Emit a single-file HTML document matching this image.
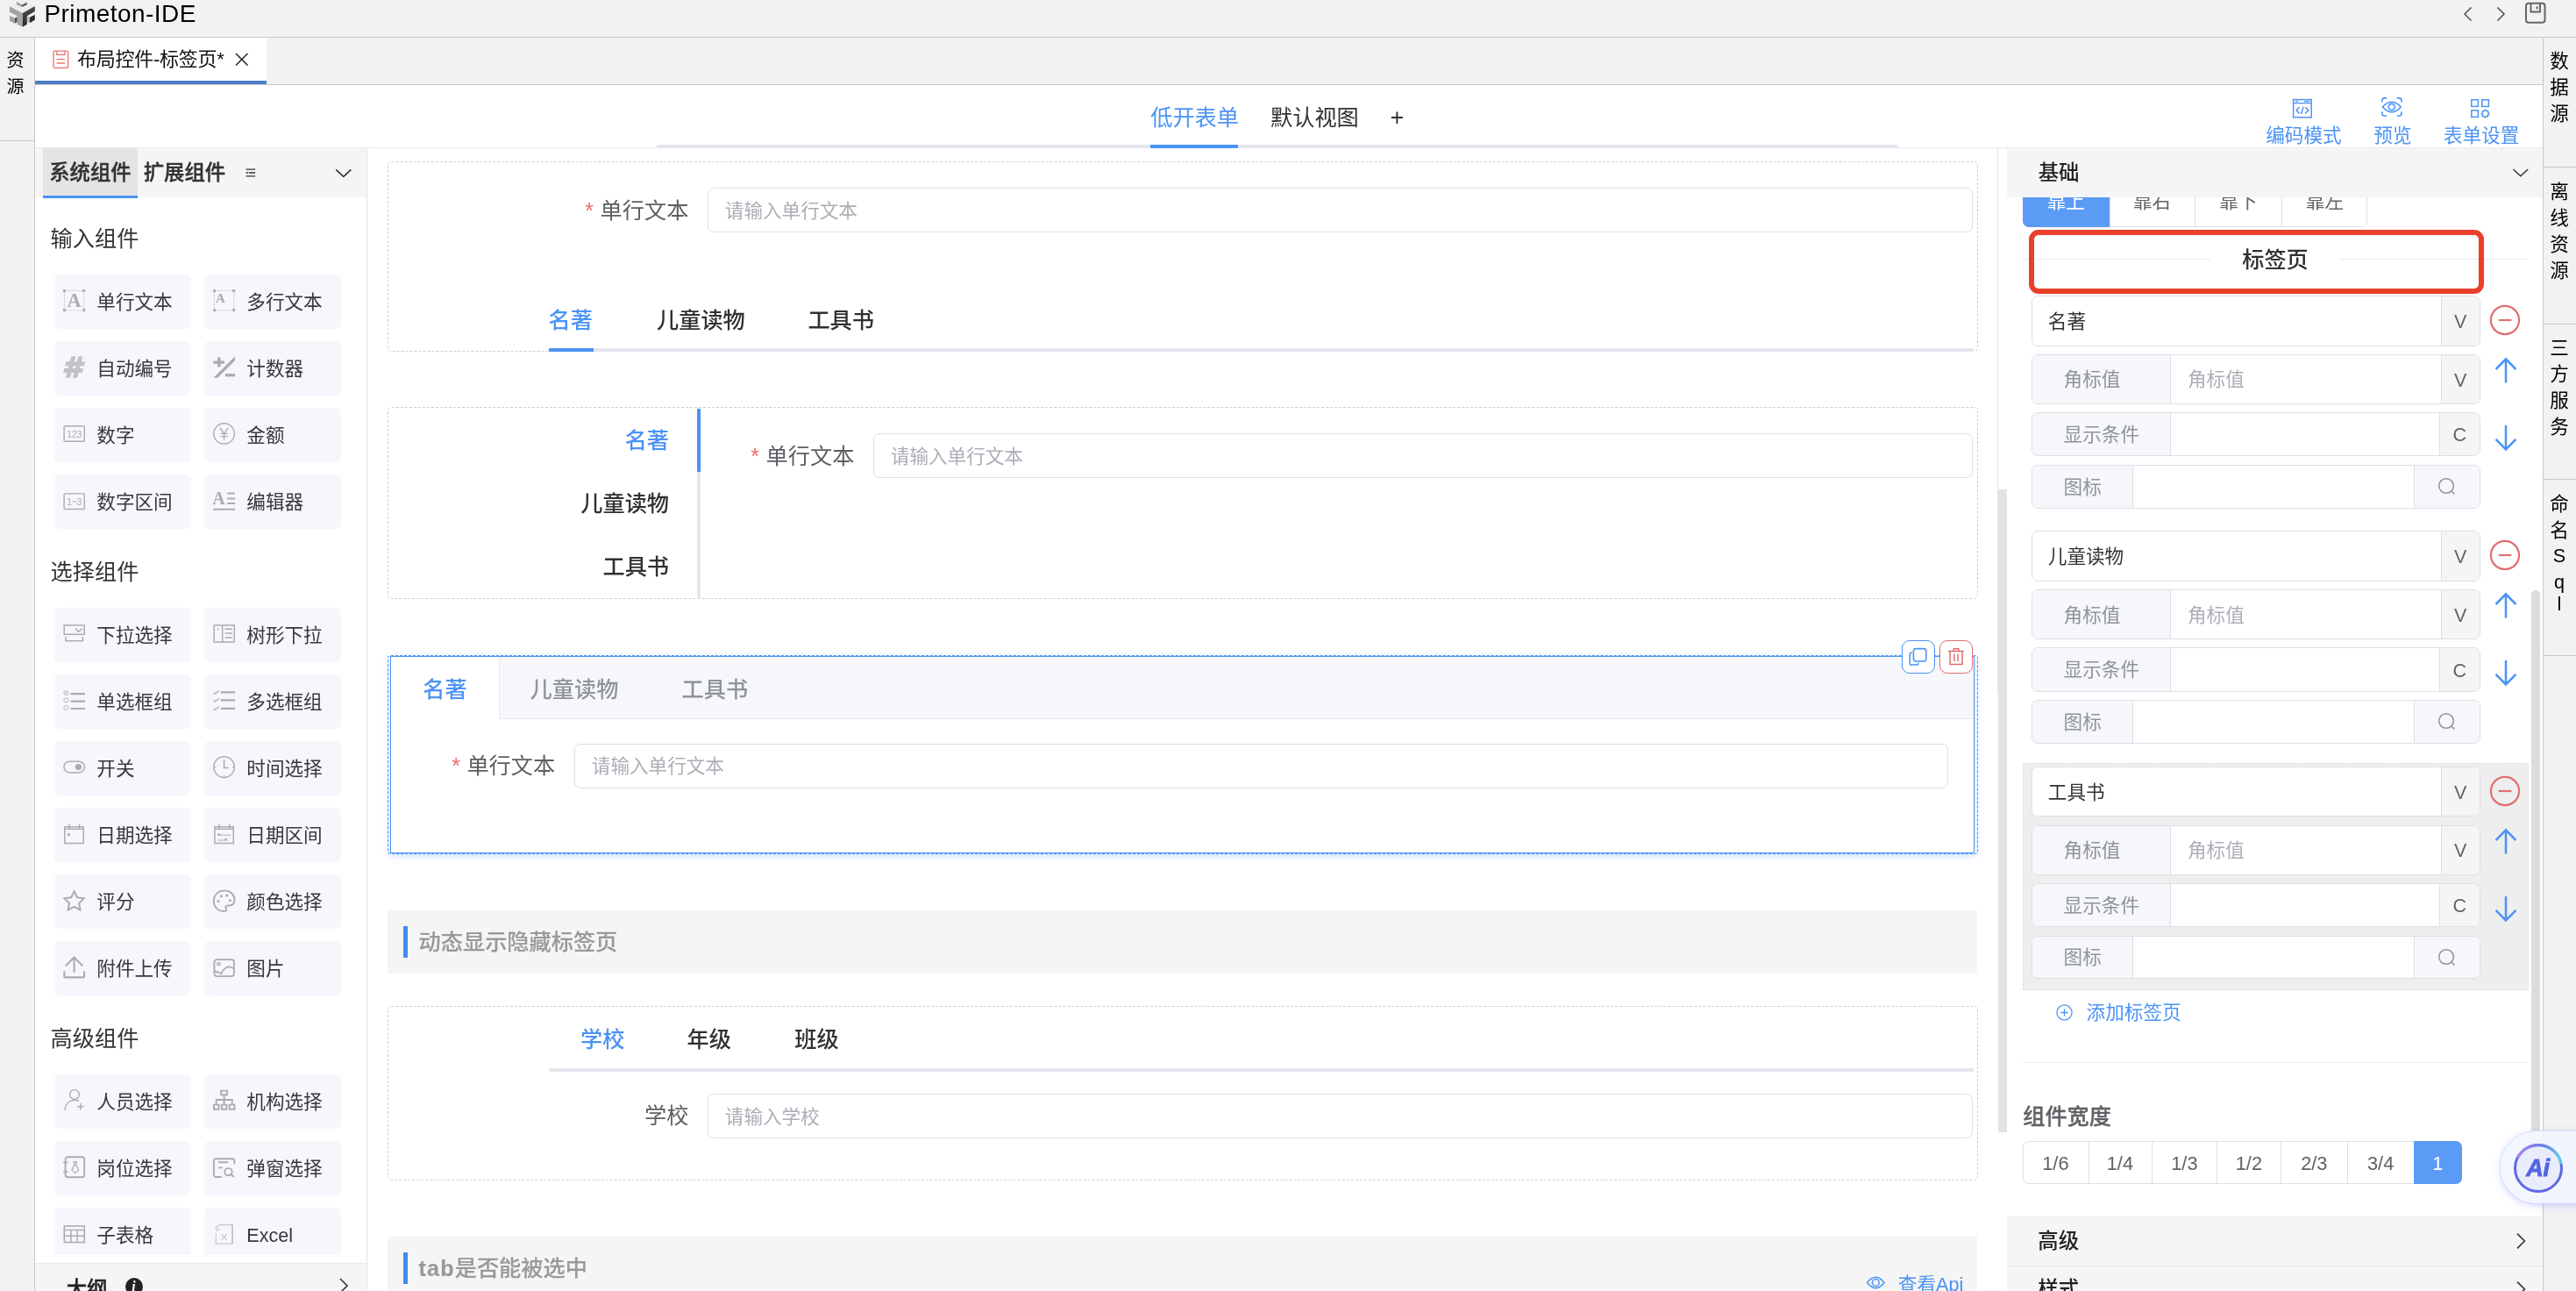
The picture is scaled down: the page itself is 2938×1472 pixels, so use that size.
<!DOCTYPE html>
<html lang="zh-CN"><head><meta charset="utf-8"><title>Primeton-IDE</title>
<style>
html,body{margin:0;padding:0;}
body{width:2938px;height:1472px;overflow:hidden;background:#fff;position:relative;font-family:"Liberation Sans","Noto Sans CJK SC",sans-serif;}
body div,body svg{position:absolute;box-sizing:border-box;}
.t{white-space:nowrap;}
svg{overflow:visible;}
#root{left:0;top:0;width:2938px;height:1472px;will-change:transform;}
</style></head><body><div id="root">
<div style="left:0px;top:0px;width:2938px;height:42px;background:#f2f2f2;"></div>
<div style="left:0px;top:42px;width:2938px;height:1px;background:#c8c8c8;"></div>
<svg style="left:4px;top:0px;" width="44" height="36" viewBox="0 0 1578 1291">
<defs>
<linearGradient id="lgA" x1="0" y1="0" x2="1" y2="0"><stop offset="0" stop-color="#9e9e9e"/><stop offset="1" stop-color="#a8a8a8"/></linearGradient>
<linearGradient id="lgB" x1="0" y1="0" x2="0" y2="1"><stop offset="0" stop-color="#4a4a4a"/><stop offset="1" stop-color="#2b2b2b"/></linearGradient>
</defs>
<polygon points="250,255 770,0 1285,250 780,540" fill="#eeeeee"/>
<polygon points="540,75 760,200 760,285 540,185" fill="#9c9c9c"/>
<polygon points="760,200 960,95 960,185 760,285" fill="#555"/>
<polygon points="250,260 780,540 780,1105 560,995 560,650 250,490" fill="url(#lgA)"/>
<polygon points="780,540 1285,250 1285,470 960,650 960,995 780,1105" fill="url(#lgB)"/>
<polygon points="250,640 350,590 560,690 460,740" fill="#efefef"/>
<polygon points="250,640 460,740 460,960 250,850" fill="#a3a3a3"/>
<polygon points="460,740 560,690 560,900 460,960" fill="#4c4c4c"/>
<polygon points="975,655 1190,550 1285,600 1075,710" fill="#f0f0f0"/>
<polygon points="975,655 1075,710 1075,940 975,890" fill="#b8b8b8"/>
<polygon points="1075,710 1285,600 1285,810 1075,940" fill="#2a2a2a"/>
</svg>
<div class="t" style="top:-7.00px;font-size:28px;line-height:45px;color:#000;left:50.46px;letter-spacing:0.45px;">Primeton-IDE</div>
<svg style="left:2806px;top:6px;" width="18" height="20" viewBox="0 0 18 20"><path d="M12.5 2.5 L5 10 L12.5 17.5" fill="none" stroke="#555" stroke-width="1.6"/></svg>
<svg style="left:2843px;top:6px;" width="18" height="20" viewBox="0 0 18 20"><path d="M5.5 2.5 L13 10 L5.5 17.5" fill="none" stroke="#555" stroke-width="1.6"/></svg>
<svg style="left:2878px;top:1.4px;" width="28" height="28" viewBox="0 0 28 28"><rect x="3" y="2.8" width="21.5" height="22" rx="3" fill="none" stroke="#666" stroke-width="2"/><path d="M8.5 3 V12.6 H19 V3" fill="none" stroke="#666" stroke-width="2"/><path d="M15.6 6.2 V9.4" stroke="#666" stroke-width="2"/></svg>
<div style="left:0px;top:43px;width:39px;height:1429px;background:#f2f2f2;"></div>
<div style="left:39px;top:43px;width:1px;height:1429px;background:#c8c8c8;"></div>
<div style="left:0px;top:160px;width:39px;height:1px;background:#c8c8c8;"></div>
<div class="t" style="top:53.00px;font-size:20px;line-height:32px;color:#000;left:-382.6px;width:800px;text-align:center;">资</div>
<div class="t" style="top:83.00px;font-size:20px;line-height:32px;color:#000;left:-382.6px;width:800px;text-align:center;">源</div>
<div style="left:40px;top:43px;width:2860px;height:53px;background:#f2f2f2;"></div>
<div style="left:40px;top:96px;width:2860px;height:1px;background:#c8c8c8;"></div>
<div style="left:40px;top:43px;width:264px;height:49px;background:#fff;"></div>
<div style="left:40px;top:92px;width:264px;height:4px;background:#4b7dc9;"></div>
<svg style="left:58.6px;top:55.8px;" width="24" height="24" viewBox="0 0 24 24"><path d="M3.2 2.2 H17.4 Q18.6 2.2 18.6 3.4 V20.2 Q18.6 21.4 17.4 21.4 H3.2 Q2 21.4 2 20.2 V3.4 Q2 2.2 3.2 2.2 Z" fill="none" stroke="#e9736d" stroke-width="1.3"/><path d="M5.8 2.4 V6.4 H14.8 V2.4 M5.6 11.6 H15 M5.6 16 H15" fill="none" stroke="#e9736d" stroke-width="1.3"/></svg>
<div class="t" style="top:50.30px;font-size:22px;line-height:35px;color:#111;left:87.99px;letter-spacing:-0.25px;">布局控件-标签页*</div>
<svg style="left:266px;top:58px;" width="20" height="20" viewBox="0 0 20 20"><path d="M3 3 L16.5 16.5 M16.5 3 L3 16.5" stroke="#222" stroke-width="1.5" fill="none"/></svg>
<div style="left:2901px;top:43px;width:37px;height:1429px;background:#f2f2f2;"></div>
<div style="left:2900px;top:43px;width:1px;height:1429px;background:#c8c8c8;"></div>
<div style="left:2901px;top:190px;width:37px;height:1px;background:#c8c8c8;"></div>
<div style="left:2901px;top:369px;width:37px;height:1px;background:#c8c8c8;"></div>
<div style="left:2901px;top:546px;width:37px;height:1px;background:#c8c8c8;"></div>
<div style="left:2901px;top:747px;width:37px;height:1px;background:#c8c8c8;"></div>
<div class="t" style="top:52.30px;font-size:21.6px;line-height:35px;color:#000;left:2519px;width:800px;text-align:center;">数</div>
<div class="t" style="top:82.30px;font-size:21.6px;line-height:35px;color:#000;left:2519px;width:800px;text-align:center;">据</div>
<div class="t" style="top:112.30px;font-size:21.6px;line-height:35px;color:#000;left:2519px;width:800px;text-align:center;">源</div>
<div class="t" style="top:200.60px;font-size:21.6px;line-height:35px;color:#000;left:2519px;width:800px;text-align:center;">离</div>
<div class="t" style="top:230.60px;font-size:21.6px;line-height:35px;color:#000;left:2519px;width:800px;text-align:center;">线</div>
<div class="t" style="top:260.60px;font-size:21.6px;line-height:35px;color:#000;left:2519px;width:800px;text-align:center;">资</div>
<div class="t" style="top:290.60px;font-size:21.6px;line-height:35px;color:#000;left:2519px;width:800px;text-align:center;">源</div>
<div class="t" style="top:379.30px;font-size:21.6px;line-height:35px;color:#000;left:2519px;width:800px;text-align:center;">三</div>
<div class="t" style="top:409.30px;font-size:21.6px;line-height:35px;color:#000;left:2519px;width:800px;text-align:center;">方</div>
<div class="t" style="top:439.30px;font-size:21.6px;line-height:35px;color:#000;left:2519px;width:800px;text-align:center;">服</div>
<div class="t" style="top:469.30px;font-size:21.6px;line-height:35px;color:#000;left:2519px;width:800px;text-align:center;">务</div>
<div class="t" style="top:557.10px;font-size:21.6px;line-height:35px;color:#000;left:2519px;width:800px;text-align:center;">命</div>
<div class="t" style="top:586.70px;font-size:21.6px;line-height:35px;color:#000;left:2519px;width:800px;text-align:center;">名</div>
<div class="t" style="top:616.30px;font-size:21.6px;line-height:35px;color:#000;left:2519px;width:800px;text-align:center;">S</div>
<div class="t" style="top:645.90px;font-size:21.6px;line-height:35px;color:#000;left:2519px;width:800px;text-align:center;">q</div>
<div class="t" style="top:670.50px;font-size:21.6px;line-height:35px;color:#000;left:2519px;width:800px;text-align:center;">l</div>
<div style="left:40px;top:97px;width:2860px;height:71px;background:#fff;"></div>
<div style="left:40px;top:168px;width:2860px;height:1px;background:#e9e9f0;"></div>
<div style="left:749px;top:165px;width:1416px;height:4px;background:#e4e7ed;"></div>
<div style="left:1312px;top:165px;width:100px;height:4px;background:#4b93f5;"></div>
<div class="t" style="top:113.50px;font-size:25.2px;line-height:40px;color:#4b93f5;left:1312.21px;">低开表单</div>
<div class="t" style="top:113.50px;font-size:25.2px;line-height:40px;color:#303133;left:1449.01px;">默认视图</div>
<div class="t" style="top:112.50px;font-size:27px;line-height:43px;color:#303133;left:1193.3px;width:800px;text-align:center;">+</div>
<svg style="left:2613px;top:111px;" width="26" height="26" viewBox="0 0 26 26"><rect x="2.6" y="2.6" width="20.6" height="20.2" fill="none" stroke="#4b93f5" stroke-width="1.5"/><path d="M2.6 6.6 H23.2 M5 4.6 H8.2 M15 4.6 H21" stroke="#4b93f5" stroke-width="1.4" fill="none"/><path d="M9.6 11.2 L6 14.8 L9.6 18.4 M16.2 11.2 L19.8 14.8 L16.2 18.4 M14.2 10.6 L11.6 19" stroke="#4b93f5" stroke-width="1.5" fill="none"/></svg>
<div class="t" style="top:137.00px;font-size:21.6px;line-height:35px;color:#4b93f5;left:2584.21px;">编码模式</div>
<svg style="left:2715px;top:110.4px;" width="26.2" height="24.4" viewBox="0 0 28 26"><path d="M2 7 V4.5 Q2 2 4.5 2 H7.5 M20 2 H23 Q25.5 2 25.5 4.5 V7 M25.5 18.5 V21 Q25.5 23.5 23 23.5 H20 M7.5 23.5 H4.5 Q2 23.5 2 21 V18.5" fill="none" stroke="#4b93f5" stroke-width="1.7"/><path d="M2.6 12.7 Q13.7 0.5 24.9 12.7 Q13.7 25 2.6 12.7 Z" fill="none" stroke="#4b93f5" stroke-width="1.7"/><circle cx="13.7" cy="12.7" r="3.8" fill="none" stroke="#4b93f5" stroke-width="1.7"/></svg>
<div class="t" style="top:137.00px;font-size:21.6px;line-height:35px;color:#4b93f5;left:2707.31px;">预览</div>
<svg style="left:2816px;top:111px;" width="26" height="26" viewBox="0 0 26 26"><rect x="2.8" y="2.8" width="7.6" height="7.6" fill="none" stroke="#4b93f5" stroke-width="1.5"/><rect x="14.8" y="2.8" width="7.6" height="7.6" fill="none" stroke="#4b93f5" stroke-width="1.5"/><rect x="2.8" y="14.8" width="7.6" height="7.6" fill="none" stroke="#4b93f5" stroke-width="1.5"/><circle cx="18.6" cy="18.6" r="3.6" fill="none" stroke="#4b93f5" stroke-width="1.6"/><path d="M18.6 13.6 V14.8 M18.6 22.4 V23.6 M13.6 18.6 H14.8 M22.4 18.6 H23.6 M15.1 15.1 L15.9 15.9 M21.3 21.3 L22.1 22.1 M15.1 22.1 L15.9 21.3 M21.3 15.9 L22.1 15.1" stroke="#4b93f5" stroke-width="1.5"/></svg>
<div class="t" style="top:137.00px;font-size:21.6px;line-height:35px;color:#4b93f5;left:2787.01px;">表单设置</div>
<div style="left:40px;top:169px;width:378px;height:1303px;background:#fff;"></div>
<div style="left:418px;top:169px;width:1px;height:1303px;background:#e3e3e6;"></div>
<div style="left:40px;top:169px;width:378px;height:56px;background:#f5f5f5;"></div>
<div style="left:49px;top:169px;width:108px;height:56px;background:#e4e4e4;"></div>
<div style="left:49px;top:223px;width:108px;height:3px;background:#4b93f5;"></div>
<div class="t" style="top:179.10px;font-size:23.4px;line-height:37px;color:#333;font-weight:500;left:56.21px;-webkit-text-stroke:0.4px #333;">系统组件</div>
<div class="t" style="top:179.10px;font-size:23.4px;line-height:37px;color:#333;font-weight:500;left:163.71px;-webkit-text-stroke:0.4px #333;">扩展组件</div>
<svg style="left:279px;top:191px;" width="14" height="12" viewBox="0 0 14 12"><path d="M1.4 2.2 H12.2 M4.8 6 H12.2 M1.4 9.8 H12.2" stroke="#333" stroke-width="1.3" fill="none"/><path d="M3.6 4.4 L1.2 6 L3.6 7.6 Z" fill="#333"/></svg>
<svg style="left:381px;top:190px;" width="22" height="14" viewBox="0 0 22 14"><path d="M2.2 3.4 L10.8 11.4 L19.4 3.4" stroke="#333" stroke-width="1.6" fill="none"/></svg>
<div style="left:40px;top:226px;width:378px;height:1205px;overflow:hidden;">
<div class="t" style="top:26.00px;font-size:25.2px;line-height:40px;color:#333;left:17.61px;">输入组件</div>
<div style="left:22px;top:87px;width:156px;height:62px;background:#f6f6fd;border-radius:6px;"></div>
<svg style="left:32px;top:104px;" width="25.2" height="25.2" viewBox="0 0 25.2 25.2"><rect x="1.4" y="1.4" width="22.4" height="22.4" fill="none" stroke="#acacb0" stroke-width="1" stroke-dasharray="1.2 1.6"/><rect x="0.0" y="0.0" width="3" height="3" fill="#acacb0"/><rect x="22.2" y="0.0" width="3" height="3" fill="#acacb0"/><rect x="0.0" y="22.2" width="3" height="3" fill="#acacb0"/><rect x="22.2" y="22.2" width="3" height="3" fill="#acacb0"/><text x="12.6" y="20.2" font-family="Liberation Serif,serif" font-weight="bold" font-size="22.5" text-anchor="middle" fill="#acacb0">A</text></svg>
<div class="t" style="top:101.10px;font-size:21.6px;line-height:35px;color:#38383a;left:70.31px;">单行文本</div>
<div style="left:193px;top:87px;width:156px;height:62px;background:#f6f6fd;border-radius:6px;"></div>
<svg style="left:203px;top:104px;" width="25.2" height="25.2" viewBox="0 0 25.2 25.2"><rect x="1.4" y="1.4" width="22.4" height="22.4" fill="none" stroke="#acacb0" stroke-width="1" stroke-dasharray="1.2 1.6"/><rect x="0.0" y="0.0" width="3" height="3" fill="#acacb0"/><rect x="22.2" y="0.0" width="3" height="3" fill="#acacb0"/><rect x="0.0" y="22.2" width="3" height="3" fill="#acacb0"/><rect x="22.2" y="22.2" width="3" height="3" fill="#acacb0"/><text x="8.3" y="14.8" font-family="Liberation Serif,serif" font-weight="bold" font-size="15" text-anchor="middle" fill="#acacb0">A</text></svg>
<div class="t" style="top:101.10px;font-size:21.6px;line-height:35px;color:#38383a;left:241.31px;">多行文本</div>
<div style="left:22px;top:163px;width:156px;height:62px;background:#f6f6fd;border-radius:6px;"></div>
<svg style="left:32px;top:180px;" width="25.2" height="25.2" viewBox="0 0 25.2 25.2"><g fill="#c3c3c7"><polygon points="9.2,0.2 14.5,0.2 8,24.8 2.7,24.8"/><polygon points="17.4,0.2 22.4,0.2 16.1,24.8 10.9,24.8"/><polygon points="3.3,6.3 25.1,6.3 24,11.2 2.2,11.2"/><polygon points="1.2,14 23,14 21.9,18.9 0.1,18.9"/></g></svg>
<div class="t" style="top:177.10px;font-size:21.6px;line-height:35px;color:#38383a;left:70.31px;">自动编号</div>
<div style="left:193px;top:163px;width:156px;height:62px;background:#f6f6fd;border-radius:6px;"></div>
<svg style="left:203px;top:180px;" width="25.2" height="25.2" viewBox="0 0 25.2 25.2"><g fill="#acacb0"><rect x="0.4" y="5.5" width="12.6" height="3.3"/><rect x="5" y="1.4" width="3.6" height="11"/><polygon points="25.1,0.2 25.1,5 5.3,24.8 0.4,24.8"/><rect x="13.9" y="20.1" width="11.2" height="3.3"/></g></svg>
<div class="t" style="top:177.10px;font-size:21.6px;line-height:35px;color:#38383a;left:241.31px;">计数器</div>
<div style="left:22px;top:239px;width:156px;height:62px;background:#f6f6fd;border-radius:6px;"></div>
<svg style="left:32px;top:256px;" width="25.2" height="25.2" viewBox="0 0 25.2 25.2"><rect x="1.1" y="3.8" width="23.2" height="17.4" rx="1.2" fill="none" stroke="#acacb0" stroke-width="1.4"/><text x="12.7" y="16.6" font-family="Liberation Sans,sans-serif" font-size="10.6" text-anchor="middle" fill="#acacb0" letter-spacing="-0.3">123</text></svg>
<div class="t" style="top:253.10px;font-size:21.6px;line-height:35px;color:#38383a;left:70.31px;">数字</div>
<div style="left:193px;top:239px;width:156px;height:62px;background:#f6f6fd;border-radius:6px;"></div>
<svg style="left:203px;top:256px;" width="25.2" height="25.2" viewBox="0 0 25.2 25.2"><circle cx="12.6" cy="12.5" r="11.8" fill="none" stroke="#acacb0" stroke-width="1.4"/><path d="M8 6 L12.6 12.4 L17.2 6 M12.6 12.4 V19.8 M8.6 12.4 H16.6 M8.6 15.7 H16.6" fill="none" stroke="#acacb0" stroke-width="1.3" /></svg>
<div class="t" style="top:253.10px;font-size:21.6px;line-height:35px;color:#38383a;left:241.31px;">金额</div>
<div style="left:22px;top:315px;width:156px;height:62px;background:#f6f6fd;border-radius:6px;"></div>
<svg style="left:32px;top:332px;" width="25.2" height="25.2" viewBox="0 0 25.2 25.2"><rect x="1.1" y="4.9" width="23.2" height="17.6" rx="1.2" fill="none" stroke="#acacb0" stroke-width="1.4"/><text x="12.7" y="17.8" font-family="Liberation Sans,sans-serif" font-size="10.6" text-anchor="middle" fill="#acacb0" letter-spacing="-0.3">1~3</text></svg>
<div class="t" style="top:329.10px;font-size:21.6px;line-height:35px;color:#38383a;left:70.31px;">数字区间</div>
<div style="left:193px;top:315px;width:156px;height:62px;background:#f6f6fd;border-radius:6px;"></div>
<svg style="left:203px;top:332px;" width="25.2" height="25.2" viewBox="0 0 25.2 25.2"><text x="6.4" y="16.9" font-family="Liberation Serif,serif" font-weight="bold" font-size="20" text-anchor="middle" fill="#acacb0">A</text><path d="M16.3 4.6 H25.1 M16.3 10.4 H25.1 M16.3 16.1 H25.1 M0.2 22.8 H25.1" fill="none" stroke="#acacb0" stroke-width="2" /></svg>
<div class="t" style="top:329.10px;font-size:21.6px;line-height:35px;color:#38383a;left:241.31px;">编辑器</div>
<div class="t" style="top:406.00px;font-size:25.2px;line-height:40px;color:#333;left:17.61px;">选择组件</div>
<div style="left:22px;top:467px;width:156px;height:62px;background:#f6f6fd;border-radius:6px;"></div>
<svg style="left:32px;top:484px;" width="25.2" height="25.2" viewBox="0 0 25.2 25.2"><rect x="1.2" y="2.9" width="23" height="10.4" fill="none" stroke="#acacb0" stroke-width="1.5"/><path d="M13.9 6.6 L17.8 10.2 L21.7 6.6 M3 15.7 V20.8 H22.4 V15.7" fill="none" stroke="#acacb0" stroke-width="1.5" /></svg>
<div class="t" style="top:481.10px;font-size:21.6px;line-height:35px;color:#38383a;left:70.31px;">下拉选择</div>
<div style="left:193px;top:467px;width:156px;height:62px;background:#f6f6fd;border-radius:6px;"></div>
<svg style="left:203px;top:484px;" width="25.2" height="25.2" viewBox="0 0 25.2 25.2"><rect x="1.2" y="2.9" width="23" height="19.2" fill="none" stroke="#acacb0" stroke-width="1.5"/><path d="M10.7 2.9 V22.1 M13.6 7.3 H22 M13.6 12.1 H22 M13.6 17 H22" fill="none" stroke="#acacb0" stroke-width="1.5" /><polygon points="5,5.9 7.2,7.3 5,8.7" fill="#acacb0"/></svg>
<div class="t" style="top:481.10px;font-size:21.6px;line-height:35px;color:#38383a;left:241.31px;">树形下拉</div>
<div style="left:22px;top:543px;width:156px;height:62px;background:#f6f6fd;border-radius:6px;"></div>
<svg style="left:32px;top:560px;" width="25.2" height="25.2" viewBox="0 0 25.2 25.2"><circle cx="3.3" cy="4.1" r="2.5" fill="none" stroke="#acacb0" stroke-width="0.9"/><circle cx="3.3" cy="12.4" r="2.5" fill="none" stroke="#acacb0" stroke-width="0.9"/><circle cx="3.3" cy="21" r="2.5" fill="none" stroke="#acacb0" stroke-width="0.9"/><circle cx="3.3" cy="4.1" r="0.9" fill="#acacb0"/><path d="M8.4 5.2 H24.9 M8.4 13.6 H24.9 M8.4 22 H24.9" fill="none" stroke="#acacb0" stroke-width="2.2" /></svg>
<div class="t" style="top:557.10px;font-size:21.6px;line-height:35px;color:#38383a;left:70.31px;">单选框组</div>
<div style="left:193px;top:543px;width:156px;height:62px;background:#f6f6fd;border-radius:6px;"></div>
<svg style="left:203px;top:560px;" width="25.2" height="25.2" viewBox="0 0 25.2 25.2"><path d="M0.6 3.4 L2.4 5.2 L6.7 1.4 M0.6 12.4 L2.4 14.2 L6.7 10.4 M0.6 21.6 L2.4 23.4 L6.7 19.6" fill="none" stroke="#acacb0" stroke-width="1.3" /><path d="M8.6 3.4 H25.1 M8.6 12.4 H25.1 M8.6 21.8 H25.1" fill="none" stroke="#acacb0" stroke-width="2.2" /></svg>
<div class="t" style="top:557.10px;font-size:21.6px;line-height:35px;color:#38383a;left:241.31px;">多选框组</div>
<div style="left:22px;top:619px;width:156px;height:62px;background:#f6f6fd;border-radius:6px;"></div>
<svg style="left:32px;top:636px;" width="25.2" height="25.2" viewBox="0 0 25.2 25.2"><rect x="1" y="6.2" width="23.4" height="12.7" rx="6.35" fill="none" stroke="#acacb0" stroke-width="1.5"/><circle cx="17.4" cy="12.6" r="3.6" fill="#acacb0"/></svg>
<div class="t" style="top:633.10px;font-size:21.6px;line-height:35px;color:#38383a;left:70.31px;">开关</div>
<div style="left:193px;top:619px;width:156px;height:62px;background:#f6f6fd;border-radius:6px;"></div>
<svg style="left:203px;top:636px;" width="25.2" height="25.2" viewBox="0 0 25.2 25.2"><circle cx="12.6" cy="12.6" r="11.8" fill="none" stroke="#acacb0" stroke-width="1.5"/><path d="M12.6 4.2 V13.4 H17.6" fill="none" stroke="#acacb0" stroke-width="1.5" /><path d="M1.6 12.6 H3.2 M22 12.6 H23.6 M12.6 22 V23.6" fill="none" stroke="#acacb0" stroke-width="1.1" /></svg>
<div class="t" style="top:633.10px;font-size:21.6px;line-height:35px;color:#38383a;left:241.31px;">时间选择</div>
<div style="left:22px;top:695px;width:156px;height:62px;background:#f6f6fd;border-radius:6px;"></div>
<svg style="left:32px;top:712px;" width="25.2" height="25.2" viewBox="0 0 25.2 25.2"><rect x="1.8" y="4.8" width="21.4" height="18.7" fill="none" stroke="#acacb0" stroke-width="1.5"/><path d="M1.8 7.3 H23.2 M6.8 1.4 V7.3 M18.6 1.4 V7.3" fill="none" stroke="#acacb0" stroke-width="1.4" /><rect x="5.1" y="12.2" width="2.9" height="2.8" fill="#acacb0"/></svg>
<div class="t" style="top:709.10px;font-size:21.6px;line-height:35px;color:#38383a;left:70.31px;">日期选择</div>
<div style="left:193px;top:695px;width:156px;height:62px;background:#f6f6fd;border-radius:6px;"></div>
<svg style="left:203px;top:712px;" width="25.2" height="25.2" viewBox="0 0 25.2 25.2"><rect x="1.9" y="4.8" width="21.4" height="18.7" fill="none" stroke="#acacb0" stroke-width="1.5"/><path d="M1.9 7.3 H23.3 M6.9 1.4 V7.3 M18.7 1.4 V7.3" fill="none" stroke="#acacb0" stroke-width="1.4" /><rect x="5.3" y="12.2" width="2.6" height="2.4" fill="#acacb0"/><rect x="13.5" y="17.9" width="2.6" height="2.4" fill="#acacb0"/><path d="M5.3 14.2 H20 M5.3 20 H16" fill="none" stroke="#acacb0" stroke-width="1" /></svg>
<div class="t" style="top:709.10px;font-size:21.6px;line-height:35px;color:#38383a;left:241.31px;">日期区间</div>
<div style="left:22px;top:771px;width:156px;height:62px;background:#f6f6fd;border-radius:6px;"></div>
<svg style="left:32px;top:788px;" width="25.2" height="25.2" viewBox="0 0 25.2 25.2"><polygon points="12.60,2.30 16.07,9.23 23.73,10.38 18.21,15.82 19.48,23.47 12.60,19.90 5.72,23.47 6.99,15.82 1.47,10.38 9.13,9.23" fill="none" stroke="#acacb0" stroke-width="2" stroke-linejoin="miter"/></svg>
<div class="t" style="top:785.10px;font-size:21.6px;line-height:35px;color:#38383a;left:70.31px;">评分</div>
<div style="left:193px;top:771px;width:156px;height:62px;background:#f6f6fd;border-radius:6px;"></div>
<svg style="left:203px;top:788px;" width="25.2" height="25.2" viewBox="0 0 25.2 25.2"><path d="M14.5 24.6 C6 26.5 0.8 20 0.8 13.2 C0.8 6 6.5 1.4 12.8 1.4 C19.5 1.4 24.6 6 24.6 12 C24.6 17.5 20.5 18.5 17.5 18.5 C14.5 18.5 13.5 20.5 14.8 22 C15.6 23 15.5 24.3 14.5 24.6 Z" fill="none" stroke="#acacb0" stroke-width="1.9" /><circle cx="9.4" cy="7.9" r="1.55" fill="#acacb0"/><circle cx="15.7" cy="7.1" r="1.55" fill="#acacb0"/><circle cx="19.4" cy="12.8" r="1.55" fill="#acacb0"/><circle cx="6" cy="13.6" r="1.55" fill="#acacb0"/></svg>
<div class="t" style="top:785.10px;font-size:21.6px;line-height:35px;color:#38383a;left:241.31px;">颜色选择</div>
<div style="left:22px;top:847px;width:156px;height:62px;background:#f6f6fd;border-radius:6px;"></div>
<svg style="left:32px;top:864px;" width="25.2" height="25.2" viewBox="0 0 25.2 25.2"><path d="M12.6 1.8 V18.1 M3.5 10.8 L12.6 1.6 L21.7 10.8 M1.3 18.1 V23.4 Q1.3 24.4 2.3 24.4 H23.1 Q24.1 24.4 24.1 23.4 V18.1" fill="none" stroke="#acacb0" stroke-width="2.1" stroke-linecap="round"/></svg>
<div class="t" style="top:861.10px;font-size:21.6px;line-height:35px;color:#38383a;left:70.31px;">附件上传</div>
<div style="left:193px;top:847px;width:156px;height:62px;background:#f6f6fd;border-radius:6px;"></div>
<svg style="left:203px;top:864px;" width="25.2" height="25.2" viewBox="0 0 25.2 25.2"><rect x="1.4" y="4.1" width="22.5" height="19" rx="2.8" fill="none" stroke="#acacb0" stroke-width="1.9"/><circle cx="6.4" cy="9" r="1.6" fill="none" stroke="#acacb0" stroke-width="1.4"/><path d="M1.3 17.5 C4 18 7 19 9.4 20.2 C11.5 15 15.5 12 19 12.3 C21 12.5 23 13.6 24 14.8" fill="none" stroke="#acacb0" stroke-width="1.8" /></svg>
<div class="t" style="top:861.10px;font-size:21.6px;line-height:35px;color:#38383a;left:241.31px;">图片</div>
<div class="t" style="top:938.00px;font-size:25.2px;line-height:40px;color:#333;left:17.61px;">高级组件</div>
<div style="left:22px;top:999px;width:156px;height:62px;background:#f6f6fd;border-radius:6px;"></div>
<svg style="left:32px;top:1016px;" width="25.2" height="25.2" viewBox="0 0 25.2 25.2"><circle cx="13" cy="6" r="5.4" fill="none" stroke="#acacb0" stroke-width="1.4"/><path d="M1.9 23.6 C3 15.5 8 12.3 13 12.3 C15 12.3 17 12.8 18 13.5 M16 19.7 H23.6 M19.8 15.9 V23.5" fill="none" stroke="#acacb0" stroke-width="1.4" /></svg>
<div class="t" style="top:1013.10px;font-size:21.6px;line-height:35px;color:#38383a;left:70.31px;">人员选择</div>
<div style="left:193px;top:999px;width:156px;height:62px;background:#f6f6fd;border-radius:6px;"></div>
<svg style="left:203px;top:1016px;" width="25.2" height="25.2" viewBox="0 0 25.2 25.2"><path d="M9.1 1.6 H16.1 V6.3 H9.1 Z M12.6 6.3 V12 M3.7 17.3 V12 H21.8 V17.3 M12.6 12 V17.3 M0.9 17.6 H6.6 V22.7 H0.9 Z M9.8 17.6 H15.5 V22.7 H9.8 Z M18.8 17.6 H24.5 V22.7 H18.8 Z" fill="none" stroke="#acacb0" stroke-width="1.9" /></svg>
<div class="t" style="top:1013.10px;font-size:21.6px;line-height:35px;color:#38383a;left:241.31px;">机构选择</div>
<div style="left:22px;top:1075px;width:156px;height:62px;background:#f6f6fd;border-radius:6px;"></div>
<svg style="left:32px;top:1092px;" width="25.2" height="25.2" viewBox="0 0 25.2 25.2"><rect x="2.6" y="1.2" width="21.6" height="23" rx="2.8" fill="none" stroke="#acacb0" stroke-width="1.9"/><path d="M0.2 7.4 H5.4 M0.2 17.9 H5.4" fill="none" stroke="#acacb0" stroke-width="1.7" /><path d="M12.2 6.6 H15.5 L14.5 9.6 L17.7 16.4 L13.8 19.5 L9.9 16.4 L13.1 9.6 Z M13.1 9.6 H14.5" fill="none" stroke="#acacb0" stroke-width="1.2" /></svg>
<div class="t" style="top:1089.10px;font-size:21.6px;line-height:35px;color:#38383a;left:70.31px;">岗位选择</div>
<div style="left:193px;top:1075px;width:156px;height:62px;background:#f6f6fd;border-radius:6px;"></div>
<svg style="left:203px;top:1092px;" width="25.2" height="25.2" viewBox="0 0 25.2 25.2"><path d="M9.8 24 H3.7 Q0.9 24 0.9 21.2 V6 Q0.9 3.2 3.7 3.2 H21.6 Q24.4 3.2 24.4 6 V9.6 M6.1 7.2 H17.1 M6.1 13.4 H10.6 M20.7 21.3 L24 24.1" fill="none" stroke="#acacb0" stroke-width="1.9" /><circle cx="17.5" cy="18.1" r="4.2" fill="none" stroke="#acacb0" stroke-width="1.9"/></svg>
<div class="t" style="top:1089.10px;font-size:21.6px;line-height:35px;color:#38383a;left:241.31px;">弹窗选择</div>
<div style="left:22px;top:1151px;width:156px;height:62px;background:#f6f6fd;border-radius:6px;"></div>
<svg style="left:32px;top:1168px;" width="25.2" height="25.2" viewBox="0 0 25.2 25.2"><rect x="1.3" y="3.9" width="23" height="18.6" fill="none" stroke="#acacb0" stroke-width="1.6"/><path d="M1.3 8.5 H24.3 M1.3 15.3 H24.3 M8.9 8.5 V22.5 M16.2 8.5 V22.5" fill="none" stroke="#acacb0" stroke-width="1.5" /></svg>
<div class="t" style="top:1165.10px;font-size:21.6px;line-height:35px;color:#38383a;left:70.31px;">子表格</div>
<div style="left:193px;top:1151px;width:156px;height:62px;background:#f6f6fd;border-radius:6px;"></div>
<svg style="left:203px;top:1168px;" width="25.2" height="25.2" viewBox="0 0 25.2 25.2"><path d="M6.6 2.6 H22 V24.2 H3.3 V12.3 M6.6 2.6 L3.4 6 Q2.6 9 5.6 8.8 Q7.6 8.4 6.9 6.6" fill="none" stroke="#c6c6ca" stroke-width="1.2"/><path d="M22 2.6 V24.2" stroke="#c0c0c4" stroke-width="1.6"/><path d="M9.6 13.2 L15.8 19.8 M15.8 13.2 L9.6 19.8" stroke="#acacb0" stroke-width="1" fill="none"/></svg>
<div class="t" style="top:1165.10px;font-size:21.6px;line-height:35px;color:#38383a;left:241.31px;">Excel</div>
</div>
<div style="left:40px;top:1440px;width:378px;height:32px;background:#f5f5f5;border-top:1px solid #e9e9f1;"></div>
<div class="t" style="top:1451.50px;font-size:23.4px;line-height:37px;color:#222;font-weight:500;left:75.71px;-webkit-text-stroke:0.4px #222;">大纲</div>
<div style="left:142.5px;top:1457px;width:20px;height:20px;border-radius:50%;background:#222;"></div>
<div class="t" style="left:142.5px;top:1457px;width:20px;text-align:center;font:italic bold 16px/20px 'Liberation Serif',serif;color:#fff;">i</div>
<svg style="left:385px;top:1456px;" width="14" height="20" viewBox="0 0 14 20"><path d="M3 2 L11 10 L3 18" stroke="#333" stroke-width="1.6" fill="none"/></svg>
<div style="left:419px;top:169px;width:1860px;height:1303px;background:#fff;"></div>
<div style="left:2278px;top:169px;width:1px;height:622px;background:#e6e6e6;"></div>
<div style="left:2279px;top:558px;width:10px;height:733px;background:#e3e3e3;"></div>
<div style="left:442px;top:184px;width:1814px;height:217px;border:1px dashed #cfcfcf;border-radius:5px;"></div>
<div class="t" style="top:219.80px;font-size:25.2px;line-height:40px;color:#ee6e6e;left:667.21px;font-family:"Liberation Sans",sans-serif;">*</div>
<div class="t" style="top:219.80px;font-size:25.2px;line-height:40px;color:#5c5e63;left:684.61px;">单行文本</div>
<div style="left:807px;top:214px;width:1443px;height:51px;border:1px solid #dcdfe6;border-radius:7px;background:#fff;"></div>
<div class="t" style="top:222.60px;font-size:21.6px;line-height:35px;color:#abaeb6;left:826.81px;">请输入单行文本</div>
<div style="left:626px;top:397px;width:1625px;height:4px;background:#e4e7ed;"></div>
<div style="left:626px;top:397px;width:51px;height:4px;background:#4b93f5;"></div>
<div class="t" style="top:345.00px;font-size:25.2px;line-height:40px;color:#4b93f5;font-weight:500;left:625.61px;">名著</div>
<div class="t" style="top:345.00px;font-size:25.2px;line-height:40px;color:#303133;font-weight:500;left:749.01px;">儿童读物</div>
<div class="t" style="top:345.00px;font-size:25.2px;line-height:40px;color:#303133;font-weight:500;left:921.41px;">工具书</div>
<div style="left:442px;top:464px;width:1814px;height:219px;border:1px dashed #cfcfcf;border-radius:5px;"></div>
<div style="left:795px;top:466px;width:4px;height:216px;background:#e4e7ed;"></div>
<div style="left:795px;top:466px;width:4px;height:72px;background:#4b93f5;"></div>
<div class="t" style="top:482.00px;font-size:25.2px;line-height:40px;color:#4b93f5;font-weight:500;right:2175px;">名著</div>
<div class="t" style="top:554.00px;font-size:25.2px;line-height:40px;color:#303133;font-weight:500;right:2175px;">儿童读物</div>
<div class="t" style="top:626.00px;font-size:25.2px;line-height:40px;color:#303133;font-weight:500;right:2175px;">工具书</div>
<div class="t" style="top:500.00px;font-size:25.2px;line-height:40px;color:#ee6e6e;left:856.21px;font-family:"Liberation Sans",sans-serif;">*</div>
<div class="t" style="top:500.00px;font-size:25.2px;line-height:40px;color:#5c5e63;left:873.61px;">单行文本</div>
<div style="left:996px;top:494px;width:1254px;height:51px;border:1px solid #dcdfe6;border-radius:7px;background:#fff;"></div>
<div class="t" style="top:502.60px;font-size:21.6px;line-height:35px;color:#abaeb6;left:1015.81px;">请输入单行文本</div>
<div style="left:445px;top:748px;width:1807px;height:225px;border:1px solid #4b93f5;background:#fff;box-shadow:0 2px 8px rgba(75,147,245,0.35);"></div>
<div style="left:442px;top:747px;width:1814px;height:227px;border:1px dashed #4b93f5;border-radius:4px;"></div>
<div style="left:447px;top:749px;width:1804px;height:70px;background:#f5f7fa;"></div>
<div style="left:447px;top:819px;width:1804px;height:1px;background:#e4e7ed;"></div>
<div style="left:447px;top:749px;width:122px;height:71px;background:#fff;"></div>
<div style="left:569px;top:749px;width:1px;height:70px;background:#e4e7ed;"></div>
<div class="t" style="top:765.70px;font-size:25.2px;line-height:40px;color:#4b93f5;font-weight:500;left:482.21px;">名著</div>
<div class="t" style="top:765.70px;font-size:25.2px;line-height:40px;color:#909399;font-weight:500;left:604.61px;">儿童读物</div>
<div class="t" style="top:765.70px;font-size:25.2px;line-height:40px;color:#909399;font-weight:500;left:777.61px;">工具书</div>
<div class="t" style="top:853.00px;font-size:25.2px;line-height:40px;color:#ee6e6e;left:515.21px;font-family:"Liberation Sans",sans-serif;">*</div>
<div class="t" style="top:853.00px;font-size:25.2px;line-height:40px;color:#5c5e63;left:532.41px;">单行文本</div>
<div style="left:655px;top:848px;width:1567px;height:50.5px;border:1px solid #dcdfe6;border-radius:7px;background:#fff;"></div>
<div class="t" style="top:856.35px;font-size:21.6px;line-height:35px;color:#abaeb6;left:674.81px;">请输入单行文本</div>
<div style="left:2169px;top:730px;width:38px;height:38px;border:1px solid #4b93f5;border-radius:9px;background:#fff;"></div>
<svg style="left:2169px;top:730px;" width="38" height="38" viewBox="0 0 38 38"><path d="M19 25.4 V26.2 Q19 28 17.2 28 H11 Q9.2 28 9.2 26.2 V16 Q9.2 14.2 11 14.2 H12" fill="none" stroke="#4b93f5" stroke-width="1.5"/><rect x="13.4" y="9.6" width="14.4" height="14.4" rx="3" fill="none" stroke="#4b93f5" stroke-width="1.6"/></svg>
<div style="left:2212px;top:730px;width:38px;height:38px;border:1px solid #e26d6d;border-radius:9px;background:#fff;"></div>
<svg style="left:2212px;top:730px;" width="38" height="38" viewBox="0 0 38 38"><path d="M10 12.4 H28 M16.4 12.2 V9.8 H21.8 V12.2 M12 12.6 V27.6 H26 V12.6 M17 15.4 V24 M21 15.4 V24" fill="none" stroke="#e26d6d" stroke-width="1.5"/></svg>
<div style="left:442px;top:1038px;width:1813px;height:72px;background:#f5f5f5;"></div>
<div style="left:460px;top:1056px;width:5px;height:36px;background:#3f8cf3;"></div>
<div class="t" style="top:1054.30px;font-size:25.2px;line-height:40px;color:#999;font-weight:500;left:477.61px;-webkit-text-stroke:0.15px #999;">动态显示隐藏标签页</div>
<div style="left:442px;top:1147px;width:1814px;height:199px;border:1px dashed #cfcfcf;border-radius:5px;"></div>
<div style="left:626px;top:1218px;width:1625px;height:3.5px;background:#e4e7ed;"></div>
<div class="t" style="top:1165.00px;font-size:25.2px;line-height:40px;color:#4b93f5;font-weight:500;left:662.01px;">学校</div>
<div class="t" style="top:1165.00px;font-size:25.2px;line-height:40px;color:#303133;font-weight:500;left:783.61px;">年级</div>
<div class="t" style="top:1165.00px;font-size:25.2px;line-height:40px;color:#303133;font-weight:500;left:906.31px;">班级</div>
<div class="t" style="top:1252.30px;font-size:25.2px;line-height:40px;color:#5c5e63;left:735.11px;">学校</div>
<div style="left:807px;top:1247px;width:1443px;height:51px;border:1px solid #dcdfe6;border-radius:7px;background:#fff;"></div>
<div class="t" style="top:1255.60px;font-size:21.6px;line-height:35px;color:#abaeb6;left:826.81px;">请输入学校</div>
<div style="left:442px;top:1410px;width:1813px;height:72px;background:#f5f5f5;"></div>
<div style="left:460px;top:1428px;width:5px;height:36px;background:#3f8cf3;"></div>
<div class="t" style="top:1426.30px;font-size:25.2px;line-height:40px;color:#999;font-weight:500;left:477.61px;-webkit-text-stroke:0.15px #999;"><span style="letter-spacing:1.1px;font-weight:700">tab</span>是否能被选中</div>
<svg style="left:2127px;top:1452px;" width="24" height="20" viewBox="0 0 24 20"><path d="M2.6 10.5 Q12.3 -1.8 22 10.5 Q12.3 22.8 2.6 10.5 Z" fill="none" stroke="#4b93f5" stroke-width="1.5"/><circle cx="12.3" cy="10.5" r="3.9" fill="none" stroke="#4b93f5" stroke-width="1.5"/></svg>
<div class="t" style="top:1446.50px;font-size:21.6px;line-height:35px;color:#4b93f5;left:2164.81px;">查看Api</div>
<div style="left:2289px;top:169px;width:611px;height:1303px;background:#fff;"></div>
<div style="left:2307px;top:200px;width:393.4px;height:59px;border:1px solid #dcdfe6;border-radius:7px;background:#fff;"></div>
<div style="left:2307px;top:200px;width:99px;height:59px;background:#5b9bf6;border-radius:7px 0 0 7px;"></div>
<div style="left:2405.7px;top:200px;width:1px;height:59px;background:#dcdfe6;"></div>
<div style="left:2503.4px;top:200px;width:1px;height:59px;background:#dcdfe6;"></div>
<div style="left:2602.4px;top:200px;width:1px;height:59px;background:#dcdfe6;"></div>
<div class="t" style="top:212.00px;font-size:21.6px;line-height:35px;color:#fff;left:1956.35px;width:800px;text-align:center;">靠上</div>
<div class="t" style="top:212.00px;font-size:21.6px;line-height:35px;color:#606266;left:2054.55px;width:800px;text-align:center;">靠右</div>
<div class="t" style="top:212.00px;font-size:21.6px;line-height:35px;color:#606266;left:2152.9px;width:800px;text-align:center;">靠下</div>
<div class="t" style="top:212.00px;font-size:21.6px;line-height:35px;color:#606266;left:2251.4px;width:800px;text-align:center;">靠左</div>
<div style="left:2289px;top:169px;width:611px;height:56px;background:#f5f5f5;"></div>
<div class="t" style="top:178.80px;font-size:23.4px;line-height:37px;color:#222;font-weight:500;left:2324.71px;">基础</div>
<svg style="left:2864px;top:190px;" width="22" height="14" viewBox="0 0 22 14"><path d="M2.4 3 L10.8 10.8 L19.2 3" stroke="#333" stroke-width="1.5" fill="none"/></svg>
<div style="left:2307px;top:295px;width:576px;height:1px;background:#e8eaee;"></div>
<div style="left:2521px;top:285px;width:148px;height:20px;background:#fff;"></div>
<div class="t" style="top:276.00px;font-size:25.2px;line-height:40px;color:#303133;font-weight:500;left:2195px;width:800px;text-align:center;">标签页</div>
<div style="left:2314px;top:262.2px;width:519px;height:73px;border:6px solid #e8402a;border-radius:11px;"></div>
<div style="left:2317px;top:337px;width:512px;height:57.6px;border:1px solid #dcdfe6;border-radius:7px;background:#fff;overflow:hidden;"></div>
<div class="t" style="top:348.70px;font-size:21.6px;line-height:35px;color:#333;left:2335.81px;">名著</div>
<div style="left:2784px;top:338px;width:44px;height:55.6px;background:#f5f5f5;border-left:1px solid #dcdfe6;border-radius:0 6px 6px 0;"></div>
<div class="t" style="top:348.90px;font-size:21.6px;line-height:35px;color:#636466;left:2406.2px;width:800px;text-align:center;">V</div>
<div style="left:2317px;top:404px;width:512px;height:57px;border:1px solid #dcdfe6;border-radius:7px;background:#fff;overflow:hidden;"></div>
<div style="left:2318px;top:405px;width:158px;height:55px;background:#f5f7fa;border-right:1px solid #dcdfe6;border-radius:6px 0 0 6px;"></div>
<div class="t" style="top:415.40px;font-size:21.6px;line-height:35px;color:#909399;left:2353.61px;">角标值</div>
<div class="t" style="top:415.40px;font-size:21.6px;line-height:35px;color:#abaeb6;left:2495.01px;">角标值</div>
<div style="left:2784px;top:405px;width:44px;height:55px;background:#f5f5f5;border-left:1px solid #dcdfe6;border-radius:0 6px 6px 0;"></div>
<div class="t" style="top:415.60px;font-size:21.6px;line-height:35px;color:#636466;left:2406.2px;width:800px;text-align:center;">V</div>
<div style="left:2317px;top:469.7px;width:512px;height:50.8px;border:1px solid #dcdfe6;border-radius:7px;background:#fff;overflow:hidden;"></div>
<div style="left:2318px;top:470.7px;width:158px;height:48.8px;background:#f5f7fa;border-right:1px solid #dcdfe6;border-radius:6px 0 0 6px;"></div>
<div class="t" style="top:478.00px;font-size:21.6px;line-height:35px;color:#909399;left:2353.61px;">显示条件</div>
<div style="left:2782px;top:470.7px;width:46px;height:48.8px;background:#f5f5f5;border-left:1px solid #dcdfe6;border-radius:0 6px 6px 0;"></div>
<div class="t" style="top:478.20px;font-size:21.6px;line-height:35px;color:#636466;left:2405.2px;width:800px;text-align:center;">C</div>
<div style="left:2317px;top:530px;width:512px;height:49.5px;border:1px solid #dcdfe6;border-radius:7px;background:#fff;overflow:hidden;"></div>
<div style="left:2318px;top:531px;width:115px;height:47.5px;background:#f5f7fa;border-right:1px solid #dcdfe6;border-radius:6px 0 0 6px;"></div>
<div class="t" style="top:537.65px;font-size:21.6px;line-height:35px;color:#909399;left:2353.61px;">图标</div>
<div style="left:2753px;top:531px;width:75px;height:47.5px;background:#f5f7fa;border-left:1px solid #dcdfe6;border-radius:0 6px 6px 0;"></div>
<svg style="left:2779px;top:542.75px;" width="24" height="24" viewBox="0 0 24 24"><circle cx="11" cy="11" r="8.3" fill="none" stroke="#909399" stroke-width="1.5"/><path d="M17 17 L20.4 20.4" stroke="#909399" stroke-width="1.5"/></svg>
<svg style="left:2837.3999999999996px;top:345px;" width="40" height="40" viewBox="0 0 40 40"><circle cx="20" cy="20" r="16.1" fill="none" stroke="#e06f6f" stroke-width="2.2"/><path d="M12.8 20 H27.4" stroke="#e06f6f" stroke-width="2.2"/></svg>
<svg style="left:2844.3999999999996px;top:407.8px;" width="28" height="30" viewBox="0 0 28 30"><path d="M14 1.4 V28.6 M2.6 13 L14 1.4 L25.4 13" fill="none" stroke="#4b93f5" stroke-width="2.5"/></svg>
<svg style="left:2844.3999999999996px;top:484px;" width="28" height="30" viewBox="0 0 28 30"><path d="M14 1 V28.4 M2.6 16.8 L14 28.4 L25.4 16.8" fill="none" stroke="#4b93f5" stroke-width="2.5"/></svg>
<div style="left:2317px;top:605.3px;width:512px;height:57.6px;border:1px solid #dcdfe6;border-radius:7px;background:#fff;overflow:hidden;"></div>
<div class="t" style="top:617.00px;font-size:21.6px;line-height:35px;color:#333;left:2335.81px;">儿童读物</div>
<div style="left:2784px;top:606.3px;width:44px;height:55.6px;background:#f5f5f5;border-left:1px solid #dcdfe6;border-radius:0 6px 6px 0;"></div>
<div class="t" style="top:617.20px;font-size:21.6px;line-height:35px;color:#636466;left:2406.2px;width:800px;text-align:center;">V</div>
<div style="left:2317px;top:672.3px;width:512px;height:57px;border:1px solid #dcdfe6;border-radius:7px;background:#fff;overflow:hidden;"></div>
<div style="left:2318px;top:673.3px;width:158px;height:55px;background:#f5f7fa;border-right:1px solid #dcdfe6;border-radius:6px 0 0 6px;"></div>
<div class="t" style="top:683.70px;font-size:21.6px;line-height:35px;color:#909399;left:2353.61px;">角标值</div>
<div class="t" style="top:683.70px;font-size:21.6px;line-height:35px;color:#abaeb6;left:2495.01px;">角标值</div>
<div style="left:2784px;top:673.3px;width:44px;height:55px;background:#f5f5f5;border-left:1px solid #dcdfe6;border-radius:0 6px 6px 0;"></div>
<div class="t" style="top:683.90px;font-size:21.6px;line-height:35px;color:#636466;left:2406.2px;width:800px;text-align:center;">V</div>
<div style="left:2317px;top:738.0px;width:512px;height:50.8px;border:1px solid #dcdfe6;border-radius:7px;background:#fff;overflow:hidden;"></div>
<div style="left:2318px;top:739.0px;width:158px;height:48.8px;background:#f5f7fa;border-right:1px solid #dcdfe6;border-radius:6px 0 0 6px;"></div>
<div class="t" style="top:746.30px;font-size:21.6px;line-height:35px;color:#909399;left:2353.61px;">显示条件</div>
<div style="left:2782px;top:739.0px;width:46px;height:48.8px;background:#f5f5f5;border-left:1px solid #dcdfe6;border-radius:0 6px 6px 0;"></div>
<div class="t" style="top:746.50px;font-size:21.6px;line-height:35px;color:#636466;left:2405.2px;width:800px;text-align:center;">C</div>
<div style="left:2317px;top:798.3px;width:512px;height:49.5px;border:1px solid #dcdfe6;border-radius:7px;background:#fff;overflow:hidden;"></div>
<div style="left:2318px;top:799.3px;width:115px;height:47.5px;background:#f5f7fa;border-right:1px solid #dcdfe6;border-radius:6px 0 0 6px;"></div>
<div class="t" style="top:805.95px;font-size:21.6px;line-height:35px;color:#909399;left:2353.61px;">图标</div>
<div style="left:2753px;top:799.3px;width:75px;height:47.5px;background:#f5f7fa;border-left:1px solid #dcdfe6;border-radius:0 6px 6px 0;"></div>
<svg style="left:2779px;top:811.05px;" width="24" height="24" viewBox="0 0 24 24"><circle cx="11" cy="11" r="8.3" fill="none" stroke="#909399" stroke-width="1.5"/><path d="M17 17 L20.4 20.4" stroke="#909399" stroke-width="1.5"/></svg>
<svg style="left:2837.3999999999996px;top:613.3px;" width="40" height="40" viewBox="0 0 40 40"><circle cx="20" cy="20" r="16.1" fill="none" stroke="#e06f6f" stroke-width="2.2"/><path d="M12.8 20 H27.4" stroke="#e06f6f" stroke-width="2.2"/></svg>
<svg style="left:2844.3999999999996px;top:676.0999999999999px;" width="28" height="30" viewBox="0 0 28 30"><path d="M14 1.4 V28.6 M2.6 13 L14 1.4 L25.4 13" fill="none" stroke="#4b93f5" stroke-width="2.5"/></svg>
<svg style="left:2844.3999999999996px;top:752.3px;" width="28" height="30" viewBox="0 0 28 30"><path d="M14 1 V28.4 M2.6 16.8 L14 28.4 L25.4 16.8" fill="none" stroke="#4b93f5" stroke-width="2.5"/></svg>
<div style="left:2307px;top:869.5999999999999px;width:577px;height:259.4px;background:#eee;border:1px dashed #e0e0e0;"></div>
<div style="left:2317px;top:873.8px;width:512px;height:57.6px;border:1px solid #dcdfe6;border-radius:7px;background:#fff;overflow:hidden;"></div>
<div class="t" style="top:885.50px;font-size:21.6px;line-height:35px;color:#333;left:2335.81px;">工具书</div>
<div style="left:2784px;top:874.8px;width:44px;height:55.6px;background:#f5f5f5;border-left:1px solid #dcdfe6;border-radius:0 6px 6px 0;"></div>
<div class="t" style="top:885.70px;font-size:21.6px;line-height:35px;color:#636466;left:2406.2px;width:800px;text-align:center;">V</div>
<div style="left:2317px;top:940.8px;width:512px;height:57px;border:1px solid #dcdfe6;border-radius:7px;background:#fff;overflow:hidden;"></div>
<div style="left:2318px;top:941.8px;width:158px;height:55px;background:#f5f7fa;border-right:1px solid #dcdfe6;border-radius:6px 0 0 6px;"></div>
<div class="t" style="top:952.20px;font-size:21.6px;line-height:35px;color:#909399;left:2353.61px;">角标值</div>
<div class="t" style="top:952.20px;font-size:21.6px;line-height:35px;color:#abaeb6;left:2495.01px;">角标值</div>
<div style="left:2784px;top:941.8px;width:44px;height:55px;background:#f5f5f5;border-left:1px solid #dcdfe6;border-radius:0 6px 6px 0;"></div>
<div class="t" style="top:952.40px;font-size:21.6px;line-height:35px;color:#636466;left:2406.2px;width:800px;text-align:center;">V</div>
<div style="left:2317px;top:1006.5px;width:512px;height:50.8px;border:1px solid #dcdfe6;border-radius:7px;background:#fff;overflow:hidden;"></div>
<div style="left:2318px;top:1007.5px;width:158px;height:48.8px;background:#f5f7fa;border-right:1px solid #dcdfe6;border-radius:6px 0 0 6px;"></div>
<div class="t" style="top:1014.80px;font-size:21.6px;line-height:35px;color:#909399;left:2353.61px;">显示条件</div>
<div style="left:2782px;top:1007.5px;width:46px;height:48.8px;background:#f5f5f5;border-left:1px solid #dcdfe6;border-radius:0 6px 6px 0;"></div>
<div class="t" style="top:1015.00px;font-size:21.6px;line-height:35px;color:#636466;left:2405.2px;width:800px;text-align:center;">C</div>
<div style="left:2317px;top:1066.8px;width:512px;height:49.5px;border:1px solid #dcdfe6;border-radius:7px;background:#fff;overflow:hidden;"></div>
<div style="left:2318px;top:1067.8px;width:115px;height:47.5px;background:#f5f7fa;border-right:1px solid #dcdfe6;border-radius:6px 0 0 6px;"></div>
<div class="t" style="top:1074.45px;font-size:21.6px;line-height:35px;color:#909399;left:2353.61px;">图标</div>
<div style="left:2753px;top:1067.8px;width:75px;height:47.5px;background:#f5f7fa;border-left:1px solid #dcdfe6;border-radius:0 6px 6px 0;"></div>
<svg style="left:2779px;top:1079.55px;" width="24" height="24" viewBox="0 0 24 24"><circle cx="11" cy="11" r="8.3" fill="none" stroke="#909399" stroke-width="1.5"/><path d="M17 17 L20.4 20.4" stroke="#909399" stroke-width="1.5"/></svg>
<svg style="left:2837.3999999999996px;top:881.8px;" width="40" height="40" viewBox="0 0 40 40"><circle cx="20" cy="20" r="16.1" fill="none" stroke="#e06f6f" stroke-width="2.2"/><path d="M12.8 20 H27.4" stroke="#e06f6f" stroke-width="2.2"/></svg>
<svg style="left:2844.3999999999996px;top:944.5999999999999px;" width="28" height="30" viewBox="0 0 28 30"><path d="M14 1.4 V28.6 M2.6 13 L14 1.4 L25.4 13" fill="none" stroke="#4b93f5" stroke-width="2.5"/></svg>
<svg style="left:2844.3999999999996px;top:1020.8px;" width="28" height="30" viewBox="0 0 28 30"><path d="M14 1 V28.4 M2.6 16.8 L14 28.4 L25.4 16.8" fill="none" stroke="#4b93f5" stroke-width="2.5"/></svg>
<svg style="left:2344px;top:1143.5px;" width="21" height="21" viewBox="0 0 21 21"><circle cx="10.5" cy="10.5" r="8.6" fill="none" stroke="#4b93f5" stroke-width="1.3"/><path d="M6.4 10.5 H14.6 M10.5 6.4 V14.6" stroke="#4b93f5" stroke-width="1.3"/></svg>
<div class="t" style="top:1136.90px;font-size:21.6px;line-height:35px;color:#4b93f5;left:2379.61px;">添加标签页</div>
<div style="left:2307px;top:1210.5px;width:576.5px;height:1.5px;background:#ebedf2;"></div>
<div class="t" style="top:1253.00px;font-size:25.2px;line-height:40px;color:#606266;font-weight:500;left:2307.21px;-webkit-text-stroke:0.3px #606266;">组件宽度</div>
<div style="left:2307px;top:1301px;width:501px;height:49px;border:1px solid #dcdfe6;border-radius:7px;background:#fff;"></div>
<div style="left:2382px;top:1301px;width:1px;height:49px;background:#dcdfe6;"></div>
<div style="left:2454px;top:1301px;width:1px;height:49px;background:#dcdfe6;"></div>
<div style="left:2528px;top:1301px;width:1px;height:49px;background:#dcdfe6;"></div>
<div style="left:2601px;top:1301px;width:1px;height:49px;background:#dcdfe6;"></div>
<div style="left:2677px;top:1301px;width:1px;height:49px;background:#dcdfe6;"></div>
<div style="left:2753px;top:1301px;width:1px;height:49px;background:#dcdfe6;"></div>
<div style="left:2753px;top:1301px;width:55px;height:49px;background:#5b9bf6;border-radius:0 7px 7px 0;"></div>
<div class="t" style="top:1308.50px;font-size:21.8px;line-height:35px;color:#606266;left:1944.4px;width:800px;text-align:center;">1/6</div>
<div class="t" style="top:1308.50px;font-size:21.8px;line-height:35px;color:#606266;left:2017.9px;width:800px;text-align:center;">1/4</div>
<div class="t" style="top:1308.50px;font-size:21.8px;line-height:35px;color:#606266;left:2091.4px;width:800px;text-align:center;">1/3</div>
<div class="t" style="top:1308.50px;font-size:21.8px;line-height:35px;color:#606266;left:2164.9px;width:800px;text-align:center;">1/2</div>
<div class="t" style="top:1308.50px;font-size:21.8px;line-height:35px;color:#606266;left:2239.3px;width:800px;text-align:center;">2/3</div>
<div class="t" style="top:1308.50px;font-size:21.8px;line-height:35px;color:#606266;left:2315.15px;width:800px;text-align:center;">3/4</div>
<div class="t" style="top:1308.50px;font-size:21.8px;line-height:35px;color:#fff;left:2380.4px;width:800px;text-align:center;">1</div>
<div style="left:2887px;top:673px;width:10px;height:617px;background:#dcdcdf;border-radius:5px 5px 0 0;"></div>
<div style="left:2289px;top:1387px;width:611px;height:55.5px;background:#f5f5f5;border-top:1px solid #ececf2;"></div>
<div style="left:2289px;top:1442.5px;width:611px;height:30px;background:#f5f5f5;border-top:1px solid #e8e9f0;"></div>
<div class="t" style="top:1397.20px;font-size:23.4px;line-height:37px;color:#222;font-weight:500;left:2324.31px;">高级</div>
<div class="t" style="top:1452.20px;font-size:23.4px;line-height:37px;color:#222;font-weight:500;left:2324.31px;">样式</div>
<svg style="left:2868px;top:1404px;" width="14" height="22" viewBox="0 0 14 22"><path d="M3 2.6 L11.4 11 L3 19.4" stroke="#333" stroke-width="1.6" fill="none"/></svg>
<svg style="left:2868px;top:1459px;" width="14" height="22" viewBox="0 0 14 22"><path d="M3 2.6 L11.4 11 L3 19.4" stroke="#333" stroke-width="1.6" fill="none"/></svg>
<div style="left:2852px;top:1289.5px;width:160px;height:82px;border-radius:41px;background:rgba(240,245,255,0.88);box-shadow:0 2px 10px rgba(120,120,255,0.35), 0 0 0 1px rgba(225,232,255,0.9);"></div>
<svg style="left:2866px;top:1302.5px;" width="58" height="58" viewBox="0 0 58 58"><defs><linearGradient id="aig" x1="0.1" y1="0.2" x2="0.95" y2="0.3"><stop offset="0" stop-color="#a884ea"/><stop offset="0.55" stop-color="#6d7bea"/><stop offset="1" stop-color="#58cdea"/></linearGradient>
<linearGradient id="aig2" x1="0" y1="0" x2="0" y2="1"><stop offset="0" stop-color="#9b86ea"/><stop offset="0.4" stop-color="#6f74ea" stop-opacity="0"/><stop offset="1" stop-color="#5b63e6"/></linearGradient></defs>
<circle cx="29" cy="29" r="26.5" fill="#e9ecfc" stroke="#5f68e6" stroke-width="3"/>
<path d="M5.5 17 A26.5 26.5 0 0 1 55 24" fill="none" stroke="url(#aig)" stroke-width="3"/>
<text x="28.5" y="38.4" font-family="Liberation Sans,sans-serif" font-weight="bold" font-style="italic" font-size="27" text-anchor="middle" fill="#5366e0" stroke="#5366e0" stroke-width="0.9" letter-spacing="-0.3">Ai</text></svg>
</div></body></html>
